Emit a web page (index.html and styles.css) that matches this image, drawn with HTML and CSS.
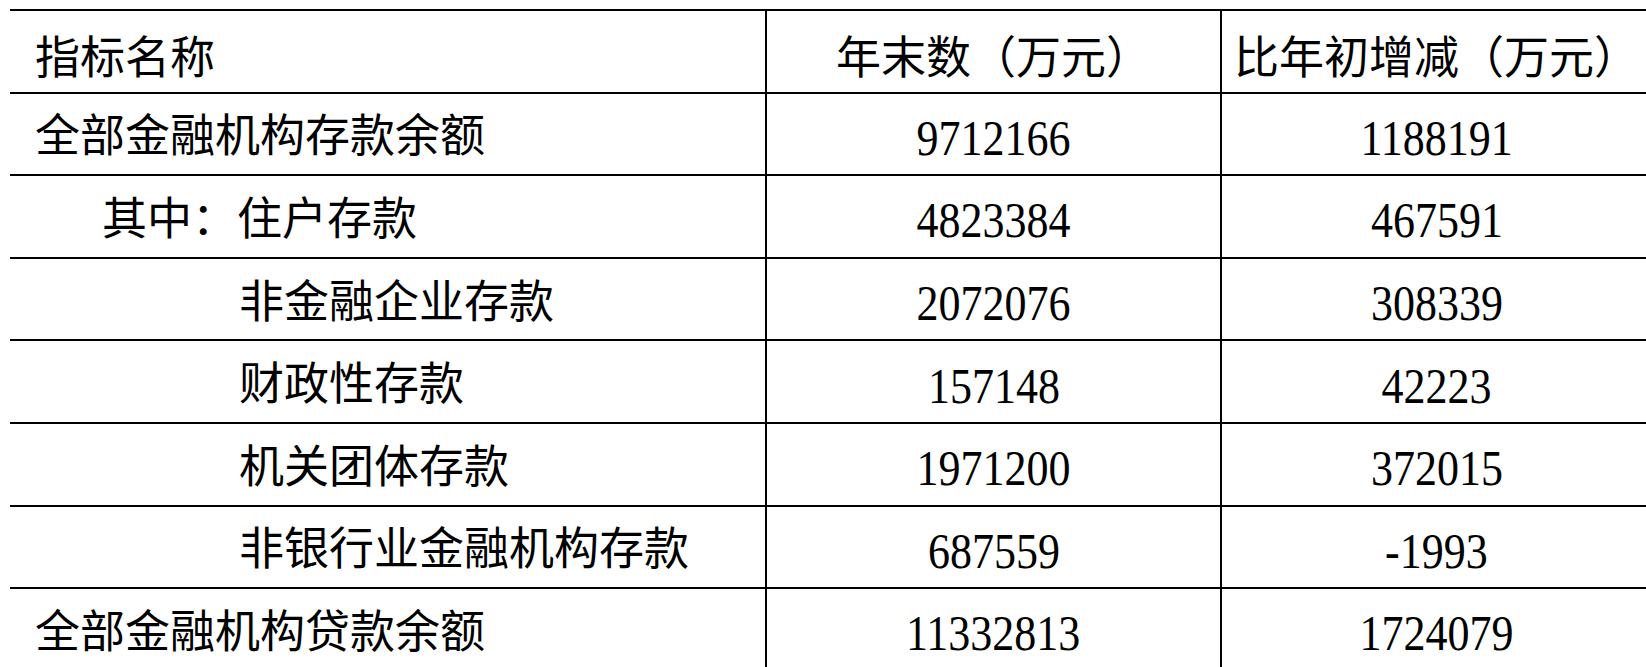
FILE: index.html
```html
<!DOCTYPE html>
<html>
<head>
<meta charset="utf-8">
<title>金融机构存贷款</title>
<link rel="stylesheet" href="styles.css">
</head>
<body>
<table class="stats">
  <colgroup>
    <col class="c-name">
    <col class="c-end">
    <col class="c-diff">
  </colgroup>
  <tr class="head">
    <td class="name">指标名称</td>
    <td class="num">年末数（万元）</td>
    <td class="num">比年初增减（万元）</td>
  </tr>
  <tr>
    <td class="name">全部金融机构存款余额</td>
    <td class="num"><span class="val">9712166</span></td>
    <td class="num"><span class="val">1188191</span></td>
  </tr>
  <tr>
    <td class="name indent1">其中：住户存款</td>
    <td class="num"><span class="val">4823384</span></td>
    <td class="num"><span class="val">467591</span></td>
  </tr>
  <tr>
    <td class="name indent2">非金融企业存款</td>
    <td class="num"><span class="val">2072076</span></td>
    <td class="num"><span class="val">308339</span></td>
  </tr>
  <tr>
    <td class="name indent2">财政性存款</td>
    <td class="num"><span class="val">157148</span></td>
    <td class="num"><span class="val">42223</span></td>
  </tr>
  <tr>
    <td class="name indent2">机关团体存款</td>
    <td class="num"><span class="val">1971200</span></td>
    <td class="num"><span class="val">372015</span></td>
  </tr>
  <tr>
    <td class="name indent2">非银行业金融机构存款</td>
    <td class="num"><span class="val">687559</span></td>
    <td class="num"><span class="val">-1993</span></td>
  </tr>
  <tr>
    <td class="name">全部金融机构贷款余额</td>
    <td class="num"><span class="val">11332813</span></td>
    <td class="num"><span class="val">1724079</span></td>
  </tr>
</table>
</body>
</html>
```

FILE: styles.css
```css
html, body {
  margin: 0;
  padding: 0;
  background: #ffffff;
  overflow: hidden;
}

body {
  font-family: "Liberation Serif", "Noto Sans CJK SC", serif;
  color: #000000;
}

.stats {
  margin: 9px 0 0 10px;
  width: 1641px;
  border-collapse: collapse;
  table-layout: fixed;
  font-size: 45px;
  line-height: 1;
}

.c-name { width: 756px; }
.c-end { width: 455px; }
.c-diff { width: 430px; }

.stats tr {
  height: 82.6px;
}

.stats td {
  border-top: 2px solid #000;
  border-bottom: 2px solid #000;
  padding: 8px 0 0 0;
  vertical-align: middle;
  white-space: nowrap;
}

.stats .head td {
  padding-top: 16px;
}

.stats td + td {
  border-left: 2px solid #000;
}

.stats td.name {
  text-align: left;
  padding-left: 25px;
}

.stats td.indent1 {
  padding-left: 92px;
}

.stats td.indent2 {
  padding-left: 229px;
}

.num {
  text-align: center;
}

.val {
  display: inline-block;
  font-family: "Liberation Serif", "Times New Roman", serif;
  font-size: 50px;
  transform: scaleX(0.88);
}
```
